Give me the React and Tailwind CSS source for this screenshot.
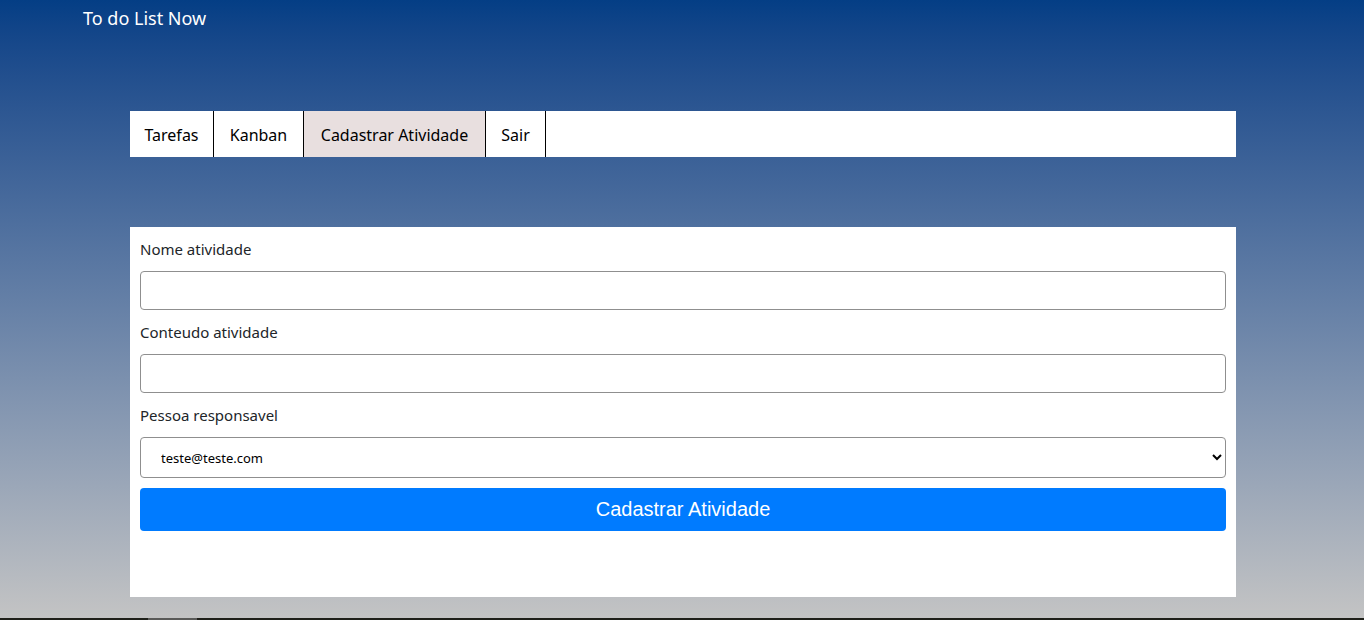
import React from "react";

const tabs = [
  { label: "Tarefas", width: "w-[84px]" },
  { label: "Kanban", width: "w-[90px]" },
  { label: "Cadastrar Atividade", width: "w-[182px]", active: true },
  { label: "Sair", width: "w-[60px]" },
];

const App = () => {
  return (
    <div className="relative h-[620px] w-full overflow-hidden bg-gradient-to-b from-[#043e85] to-[#c4c4c4] font-['Segoe_UI','Noto_Sans',sans-serif]">
      <header className="pl-[83px] pt-[6px] text-[18px] leading-6 text-white">To do List Now</header>

      <nav className="ml-[130px] mt-[81px] flex h-[46px] w-[1106px] bg-white">
        {tabs.map((tab) => (
          <a
            key={tab.label}
            href="#"
            className={`flex items-center justify-center border-r border-black pt-[2px] text-[16px] text-black ${tab.width} ${
              tab.active ? "bg-[#e8dfdf]" : ""
            }`}
          >
            {tab.label}
          </a>
        ))}
      </nav>

      <form className="ml-[130px] mt-[70px] h-[370px] w-[1106px] bg-white px-[10px] pt-[12px] text-[15px] text-[#212529]">
        <label className="block leading-5">Nome atividade</label>
        <input className="mt-[12px] block h-[39px] w-full rounded border border-[#8f8f8f]" />

        <label className="mt-[12px] block leading-5">Conteudo atividade</label>
        <input className="mt-[12px] block h-[39px] w-full rounded border border-[#8f8f8f]" />

        <label className="mt-[12px] block leading-5">Pessoa responsavel</label>
        <select className="mt-[12px] block h-[41px] w-full appearance-auto rounded border border-[#8f8f8f] bg-white pl-[16px] text-[13px] text-black">
          <option>teste@teste.com</option>
        </select>

        <button
          type="button"
          className="mt-[10px] block h-[43px] w-full rounded bg-[#007bff] pb-[1px] font-['Liberation_Sans',Arial,sans-serif] text-[20px] text-white"
        >
          Cadastrar Atividade
        </button>
      </form>

      <div className="absolute bottom-0 left-0 flex h-[2px] w-full bg-[#1f201a]">
        <div className="ml-[148px] w-[49px] bg-[#5a5a58]" />
      </div>
    </div>
  );
};

export default App;
